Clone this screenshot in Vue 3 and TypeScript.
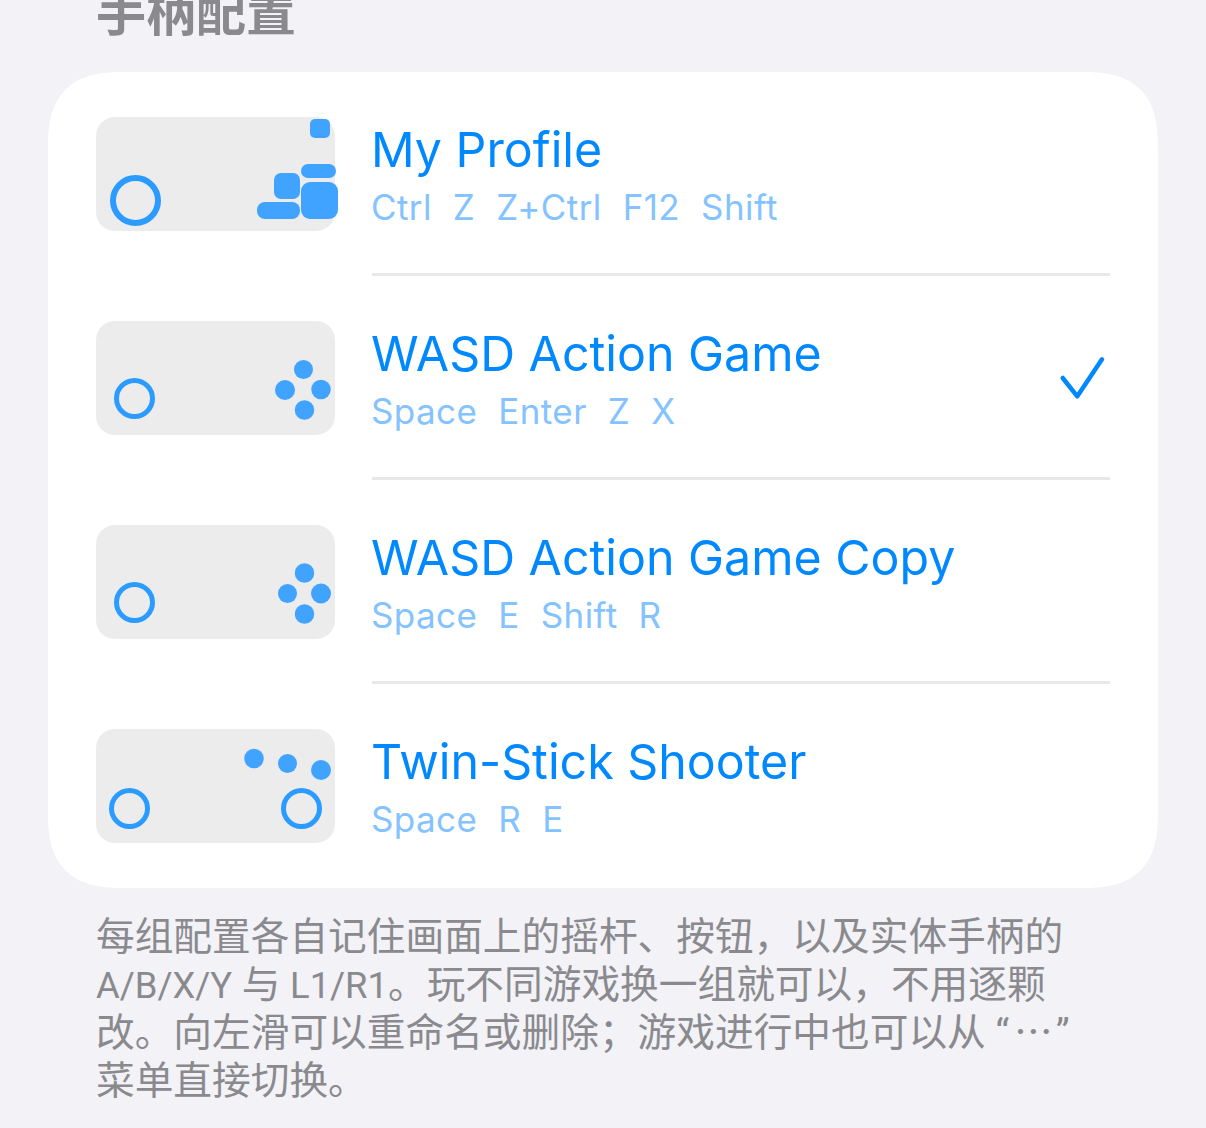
<script setup lang="ts">
interface Ring { x: number; y: number; r: number; w: number }
interface Dot { x: number; y: number; r: number }
interface Block { x: number; y: number; w: number; h: number; r: number }
interface Profile {
  name: string
  keys: string[]
  selected?: boolean
  rings: Ring[]
  dots: Dot[]
  blocks: Block[]
}

const profiles: Profile[] = [
  {
    name: 'My Profile',
    keys: ['Ctrl', 'Z', 'Z+Ctrl', 'F12', 'Shift'],
    rings: [{ x: 39.5, y: 83.5, r: 22.5, w: 6 }],
    dots: [],
    blocks: [
      { x: 214, y: 2, w: 20, h: 19, r: 5 },
      { x: 205, y: 47, w: 35, h: 14, r: 7 },
      { x: 178, y: 56, w: 26, h: 26, r: 7 },
      { x: 161, y: 85, w: 43, h: 17, r: 8 },
      { x: 205, y: 65, w: 37, h: 37, r: 9 },
    ],
  },
  {
    name: 'WASD Action Game',
    keys: ['Space', 'Enter', 'Z', 'X'],
    selected: true,
    rings: [{ x: 38.5, y: 77.5, r: 18, w: 5 }],
    dots: [
      { x: 207.5, y: 48.5, r: 9.5 },
      { x: 189, y: 69, r: 10 },
      { x: 225, y: 68.5, r: 9.75 },
      { x: 208.5, y: 89, r: 9.75 },
    ],
    blocks: [],
  },
  {
    name: 'WASD Action Game Copy',
    keys: ['Space', 'E', 'Shift', 'R'],
    rings: [{ x: 38.5, y: 77.5, r: 18, w: 5 }],
    dots: [
      { x: 208.5, y: 48, r: 9.75 },
      { x: 191.5, y: 68.5, r: 9.5 },
      { x: 225, y: 68.5, r: 10 },
      { x: 208.5, y: 89, r: 9.75 },
    ],
    blocks: [],
  },
  {
    name: 'Twin-Stick Shooter',
    keys: ['Space', 'R', 'E'],
    rings: [
      { x: 33.5, y: 79.5, r: 18, w: 5 },
      { x: 205.5, y: 79.5, r: 18, w: 5 },
    ],
    dots: [
      { x: 158, y: 29.5, r: 9.75 },
      { x: 191.5, y: 34.5, r: 9.5 },
      { x: 225, y: 41, r: 10 },
    ],
    blocks: [],
  },
]
</script>

<template>
  <main class="page">
    <h2 class="heading">手柄配置</h2>
    <section class="card">
      <div v-for="p in profiles" :key="p.name" class="row">
        <svg class="thumb" width="239" height="114" viewBox="0 0 239 114">
          <rect width="239" height="114" rx="19" class="thumb-bg" />
          <circle
            v-for="(c, i) in p.rings"
            :key="'r' + i"
            :cx="c.x"
            :cy="c.y"
            :r="c.r"
            :stroke-width="c.w"
            class="ring"
          />
          <circle v-for="(d, i) in p.dots" :key="'d' + i" :cx="d.x" :cy="d.y" :r="d.r" class="btn" />
          <rect
            v-for="(b, i) in p.blocks"
            :key="'b' + i"
            :x="b.x"
            :y="b.y"
            :width="b.w"
            :height="b.h"
            :rx="b.r"
            class="btn"
          />
        </svg>
        <div class="body">
          <div class="text">
            <div class="name">{{ p.name }}</div>
            <div class="keys">
              <span v-for="k in p.keys" :key="k">{{ k }}</span>
            </div>
          </div>
          <svg v-if="p.selected" class="check" width="48" height="48" viewBox="0 0 48 48">
            <path d="M3.7 22 L18.3 40.3 L43 3.3" />
          </svg>
        </div>
      </div>
    </section>
    <p class="note">每组配置各自记住画面上的摇杆、按钮，以及实体手柄的 <span class="latin">A/B/X/Y</span> 与 <span class="latin">L1/R1</span>。玩不同游戏换一组就可以，不用逐颗改。向左滑可以重命名或删除；游戏进行中也可以从 “<span class="ellipsis">…</span>” 菜单直接切换。</p>
  </main>
</template>

<style scoped>
.page {
  height: 1128px;
  overflow: hidden;
  box-sizing: border-box;
  padding: 0 48px;
  background: #f2f2f7;
  font-family: Inter, "Noto Sans CJK SC", sans-serif;
}
.heading {
  margin: -24px 0 0;
  padding-left: 48px;
  height: 96px;
  font-size: 50px;
  line-height: 66px;
  font-weight: 600;
  color: #8a8a8e;
  font-family: "Noto Sans CJK SC", sans-serif;
}
.card {
  background: #fff;
  border-radius: 76px;
  corner-shape: superellipse(1.4);
  padding: 0 48px;
}
.row {
  display: flex;
  align-items: center;
  height: 204px;
}
.thumb {
  flex: none;
  margin-right: 37px;
  overflow: visible;
}
.thumb-bg {
  fill: #ececec;
}
.ring {
  fill: none;
  stroke: #2b9bff;
}
.btn {
  fill: #3fa3ff;
}
.body {
  flex: 1;
  align-self: stretch;
  display: flex;
  align-items: center;
  justify-content: space-between;
  box-shadow: 0 3px 0 0 #e8e8e8;
  margin-bottom: 3px;
}
.row:last-child .body {
  box-shadow: none;
}
.text {
  padding-top: 3px;
  margin-left: -1px;
}
.name {
  font-size: 48.3px;
  line-height: 58px;
  color: #0088ff;
}
.keys {
  display: flex;
  gap: 21px;
  margin-top: 7px;
  font-size: 35px;
  letter-spacing: 0.4px;
  line-height: 42px;
  color: #84c3ff;
}
.check {
  fill: none;
  margin: 6px 3px 0 0;
}
.check path {
  fill: none;
  stroke: #0088ff;
  stroke-width: 4.5;
  stroke-linecap: round;
  stroke-linejoin: round;
}
.note {
  margin: 25px 0 0;
  padding: 0 82px 0 48px;
  font-family: Roboto, "Noto Sans CJK SC", sans-serif;
  font-size: 38.7px;
  line-height: 48px;
  color: #8a8a8e;
}
.latin {
  font-size: 36.4px;
  line-height: 0;
}
.ellipsis {
  margin: 0 3px 0 5px;
  line-height: 0;
  font-family: "Noto Sans CJK SC", sans-serif;
}
</style>

<style>
html, body { margin: 0; background: #f2f2f7; overflow: hidden; }
</style>
